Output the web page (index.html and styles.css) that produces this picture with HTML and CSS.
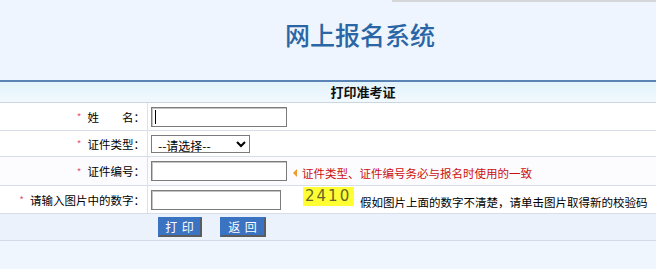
FILE: index.html
```html
<!DOCTYPE html>
<html lang="zh-CN">
<head>
    <meta charset="UTF-8">
    <meta name="viewport" content="width=device-width, initial-scale=1.0">
    <title>网上报名系统</title>
    <link rel="stylesheet" href="styles.css">
</head>
<body>
    <div class="header">
        <div class="topline"></div>
        <h1>网上报名系统</h1>
    </div>

    <div class="form">
        <div class="caption">打印准考证</div>

        <div class="row row-name">
            <label class="label"><span class="star">*</span>姓　　名：</label>
            <div class="field">
                <input type="text" class="text caret">
            </div>
        </div>

        <div class="row row-type">
            <label class="label"><span class="star">*</span>证件类型：</label>
            <div class="field">
                <select class="select">
                    <option>--请选择--</option>
                    <option>身份证</option>
                    <option>护照</option>
                </select>
            </div>
        </div>

        <div class="row row-number">
            <label class="label"><span class="star">*</span>证件编号：</label>
            <div class="field">
                <input type="text" class="text">
                <span class="arrow"></span>
                <span class="warn">证件类型、证件编号务必与报名时使用的一致</span>
            </div>
        </div>

        <div class="row row-code">
            <label class="label"><span class="star">*</span>请输入图片中的数字：</label>
            <div class="field">
                <input type="text" class="text short">
                <span class="code">2410</span>
                <span class="tip">假如图片上面的数字不清楚，请单击图片取得新的校验码</span>
            </div>
        </div>

        <div class="buttons">
            <button class="btn">打 印</button>
            <button class="btn wide">返 回</button>
        </div>
    </div>
</body>
</html>
```

FILE: styles.css
```css
body {
    margin: 0;
    padding: 0;
    background-color: #f0f6fe;
    font-family: "Noto Sans CJK SC", sans-serif;
    font-size: 11.5px;
    color: #000;
}
.header {
    height: 80px;
    background-color: #eef5fe;
    border-bottom: 2px solid #5a84b6;
}
.topline {
    height: 2px;
    margin-left: 392px;
    background-color: #d4d6d8;
}
h1 {
    margin: 17px 0 0 0;
    padding-left: 285px;
    font-size: 25px;
    line-height: 30px;
    font-weight: 500;
    color: #2a66a5;
}
.caption {
    height: 20px;
    line-height: 20px;
    padding-left: 70px;
    text-align: center;
    font-size: 13px;
    font-weight: bold;
    color: #111;
    background: linear-gradient(#e2f3fd, #f2f9fe);
    border-bottom: 1px solid #c9d6e4;
}
.row {
    display: grid;
    grid-template-columns: 148px 1fr;
    box-sizing: border-box;
    background-color: #fff;
    border-bottom: 1px solid #d6dfe9;
}
.row-name { height: 28px; }
.row-type { height: 26px; }
.row-number { height: 29px; background-color: #fcfcfe; }
.row-code { height: 28px; }
.label {
    display: flex;
    align-items: center;
    justify-content: flex-end;
    padding-right: 2px;
    border-right: 1px solid #dbe2eb;
    white-space: nowrap;
}
.star {
    color: #e2587f;
    font-size: 10px;
    margin-right: 6px;
}
.field {
    display: flex;
    align-items: center;
    padding-left: 3px;
    white-space: nowrap;
}
.text {
    box-sizing: border-box;
    width: 136px;
    height: 20px;
    margin: 0;
    padding: 0 3px;
    border: 1px solid #7b7b7b;
    box-shadow: inset 1px 1px 0 #c4c4c4;
    background-color: #fff;
    font-size: 12px;
    outline: none;
}
.caret {
    background: #fff linear-gradient(#000, #000) no-repeat 3px center / 1px 14px;
}
.short {
    width: 130px;
}
.select {
    box-sizing: border-box;
    width: 99px;
    height: 18px;
    margin: 0;
    padding: 0 0 0 2px;
    border: 1px solid #7b7b7b;
    border-radius: 0;
    background-color: #fff;
    font-family: "Noto Sans CJK SC", sans-serif;
    font-size: 12px;
    color: #000;
}
.arrow {
    width: 0;
    height: 0;
    margin-left: 6px;
    margin-top: 3px;
    border-top: 4px solid transparent;
    border-bottom: 4px solid transparent;
    border-right: 4px solid #f29a26;
}
.warn {
    margin-left: 5px;
    margin-top: 4px;
    font-size: 11.5px;
    line-height: 14px;
    color: #cc1010;
}
.code {
    align-self: flex-start;
    box-sizing: border-box;
    width: 51px;
    height: 19px;
    margin: 1px 0 0 22px;
    padding-left: 2px;
    background-color: #ffff33;
    font-family: "DejaVu Sans", sans-serif;
    font-size: 15px;
    line-height: 19px;
    letter-spacing: 2px;
    color: #66662a;
}
.tip {
    align-self: flex-start;
    margin: 9px 0 0 6px;
    line-height: 14px;
}
.buttons {
    display: flex;
    align-items: center;
    gap: 18px;
    box-sizing: border-box;
    height: 27px;
    padding-left: 158px;
    background-color: #ebf2fc;
    border-bottom: 1px solid #d3ddea;
}
.btn {
    box-sizing: border-box;
    width: 44px;
    height: 20px;
    margin: 0;
    padding: 0;
    border: 2px solid;
    border-color: #3b73c3 #5c5c5c #5c5c5c #3b73c3;
    background-color: #3b73c3;
    color: #fff;
    font-family: "Noto Sans CJK SC", sans-serif;
    font-size: 12px;
    line-height: 16px;
    letter-spacing: 1px;
}
.wide {
    width: 46px;
}
```
